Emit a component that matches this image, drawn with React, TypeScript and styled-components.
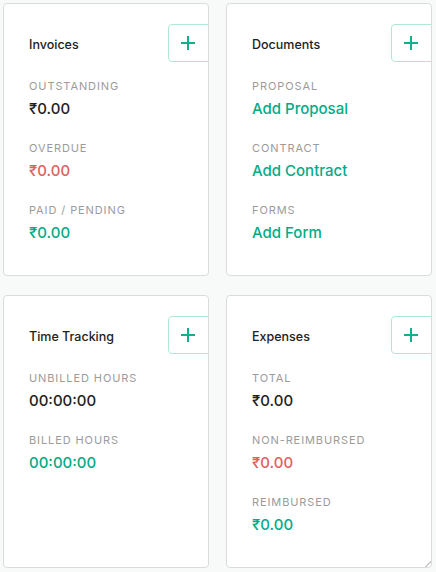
import React from "react";
import styled, { createGlobalStyle } from "styled-components";

const Global = createGlobalStyle`
  html, body { margin: 0; padding: 0; background: #f8f9f9; }
  body { font-family: Inter, "Noto Sans", sans-serif; -webkit-font-smoothing: antialiased; }
`;

const Grid = styled.div`
  display: grid;
  grid-template-columns: 206px 206px;
  column-gap: 17px;
  row-gap: 19px;
  padding: 3px 0 0 3px;
`;

const Card = styled.div`
  box-sizing: border-box;
  height: 273px;
  background: #fff;
  border: 1px solid #dadcdc;
  border-radius: 4px;
  overflow: hidden;
  padding: 20px 0 0 25px;
  position: relative;
`;

const Header = styled.div`
  display: flex;
  align-items: center;
  justify-content: space-between;
  height: 38px;
  margin-bottom: 17px;
`;

const Title = styled.div`
  font-size: 12.5px;
  color: #222;
  font-weight: 500;
  padding-top: 3px;
`;

const AddButton = styled.button`
  box-sizing: border-box;
  width: 46px;
  height: 38px;
  margin-right: -6px;
  border: 1px solid #aee8d4;
  border-radius: 4px;
  background: #fff;
  display: flex;
  align-items: center;
  padding: 0 0 0 11px;
  cursor: pointer;
`;

const Stat = styled.div`
  display: flex;
  flex-direction: column;
  margin-bottom: 21px;
`;

const Label = styled.div`
  font-size: 11px;
  letter-spacing: 0.9px;
  color: #9b9b9b;
  line-height: 14px;
  margin-bottom: 5px;
`;

const Value = styled.div<{ $tone?: "dark" | "red" | "green" }>`
  font-size: 15px;
  line-height: 22px;
  font-weight: 500;
  color: ${(p) => (p.$tone === "red" ? "#e0605e" : p.$tone === "green" ? "#00ab87" : "#222")};
`;

const Grip = styled.div`
  position: absolute;
  right: 0;
  bottom: 0;
  width: 6px;
  height: 6px;
  background: linear-gradient(135deg, transparent 45%, #c8c8c8 45%, #c8c8c8 60%, transparent 60%);
`;

type StatT = { label: string; value: string; tone?: "dark" | "red" | "green" };

const Plus = () => (
  <svg width="16" height="16" viewBox="0 0 16 16">
    <path d="M8 1v14M1 8h14" stroke="#14ae88" strokeWidth="2" />
  </svg>
);

const cards: { title: string; stats: StatT[]; grip?: boolean }[] = [
  {
    title: "Invoices",
    stats: [
      { label: "OUTSTANDING", value: "₹0.00" },
      { label: "OVERDUE", value: "₹0.00", tone: "red" },
      { label: "PAID / PENDING", value: "₹0.00", tone: "green" },
    ],
  },
  {
    title: "Documents",
    stats: [
      { label: "PROPOSAL", value: "Add Proposal", tone: "green" },
      { label: "CONTRACT", value: "Add Contract", tone: "green" },
      { label: "FORMS", value: "Add Form", tone: "green" },
    ],
  },
  {
    title: "Time Tracking",
    stats: [
      { label: "UNBILLED HOURS", value: "00:00:00" },
      { label: "BILLED HOURS", value: "00:00:00", tone: "green" },
    ],
  },
  {
    title: "Expenses",
    grip: true,
    stats: [
      { label: "TOTAL", value: "₹0.00" },
      { label: "NON-REIMBURSED", value: "₹0.00", tone: "red" },
      { label: "REIMBURSED", value: "₹0.00", tone: "green" },
    ],
  },
];

export default function App() {
  return (
    <>
      <Global />
      <Grid>
        {cards.map((c) => (
          <Card key={c.title}>
            <Header>
              <Title>{c.title}</Title>
              <AddButton aria-label={`Add ${c.title}`}>
                <Plus />
              </AddButton>
            </Header>
            {c.stats.map((s) => (
              <Stat key={s.label}>
                <Label>{s.label}</Label>
                <Value $tone={s.tone}>{s.value}</Value>
              </Stat>
            ))}
            {c.grip && <Grip />}
          </Card>
        ))}
      </Grid>
    </>
  );
}
